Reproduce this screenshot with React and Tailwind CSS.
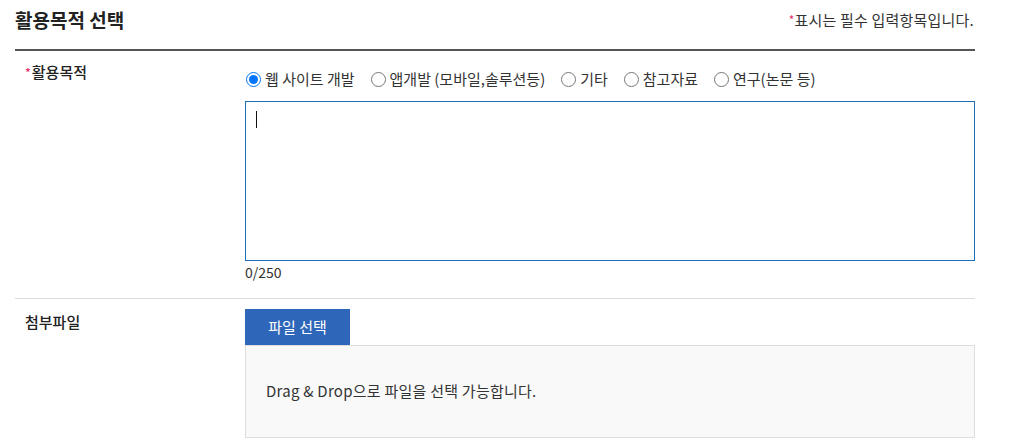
export default function App() {
  const purposes = [
    { id: "web", label: "웹 사이트 개발" },
    { id: "app", label: "앱개발 (모바일,솔루션등)" },
    { id: "etc", label: "기타" },
    { id: "ref", label: "참고자료" },
    { id: "study", label: "연구(논문 등)" },
  ]

  return (
    <div className="min-h-[445px] bg-white text-[#333] font-['Noto_Sans_CJK_KR','Noto_Sans',sans-serif]">
      <div className="w-[960px] ml-[15px]">
        <div className="h-[51px] pt-[8px] flex justify-between items-start border-b-2 border-[#555]">
          <h2 className="text-[19px] leading-[24px] font-bold text-[#222]">활용목적 선택</h2>
          <p className="text-[15px] leading-[24px] tracking-[0.2px] text-[#333] mr-[1px]">
            <span className="text-[#e4316f] text-[12px] align-top">*</span>표시는 필수 입력항목입니다.
          </p>
        </div>

        <div className="flex border-b border-[#ddd] pb-[17px]">
          <div className="w-[230px] pl-[10px] pt-[11px] text-[15px] leading-[20px] font-medium text-[#222]">
            <span className="text-[#e4316f] text-[12px] mr-[1px] align-top">*</span>활용목적
          </div>
          <div className="flex-1 pt-[18px]">
            <div className="flex items-center h-[20px] text-[15px]">
              {purposes.map((p, i) => (
                <label key={p.id} className="flex items-center mr-[15px] cursor-pointer">
                  <input
                    type="radio"
                    name="purpose"
                    defaultChecked={i === 0}
                    className="m-0 ml-[1px] w-[15px] h-[15px] mr-[4px]"
                  />
                  <span>{p.label}</span>
                </label>
              ))}
            </div>
            <div className="relative mt-[12px]">
              <textarea className="block w-full h-[160px] border border-[#1a6fb8] outline-none resize-none px-[10px] py-[8px] text-[15px]" />
              <span className="absolute left-[11px] top-[10px] w-[1px] h-[17px] bg-[#111]" />
            </div>
            <div className="mt-[2px] text-[14px] leading-[18px] text-[#333]">0/250</div>
          </div>
        </div>

        <div className="flex">
          <div className="w-[230px] pl-[10px] pt-[13px] text-[15px] leading-[20px] font-medium text-[#222]">첨부파일</div>
          <div className="flex-1 pt-[10px]">
            <button className="block w-[105px] h-[36px] bg-[#2e66b9] text-white text-[15px]">파일 선택</button>
            <div className="h-[93px] border border-[#ddd] bg-[#f9f9f9] flex items-center pl-[20px] text-[15px] tracking-[0.25px] text-[#333]">
              Drag &amp; Drop으로 파일을 선택 가능합니다.
            </div>
          </div>
        </div>
      </div>
    </div>
  )
}
